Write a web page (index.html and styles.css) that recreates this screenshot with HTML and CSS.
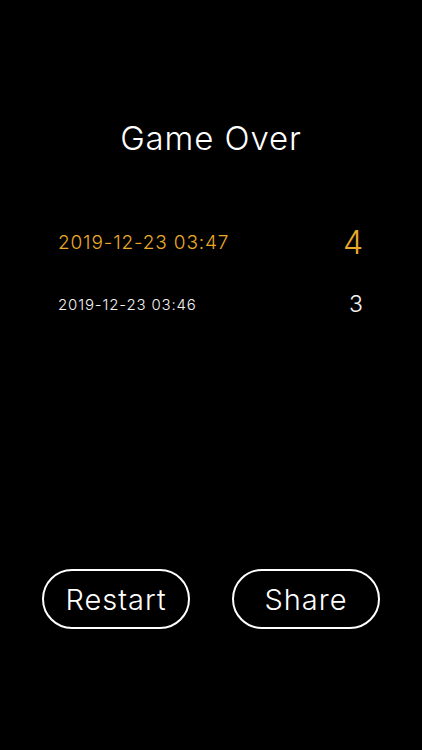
FILE: index.html
```html
<!DOCTYPE html>
<html>
<head>
<meta charset="utf-8">
<link rel="stylesheet" href="styles.css">
</head>
<body>
<div class="screen">
  <h1 class="title">Game Over</h1>
  <div class="records">
    <div class="row row-current">
      <span class="date">2019-12-23 03:47</span>
      <span class="score">4</span>
    </div>
    <div class="row row-past">
      <span class="date">2019-12-23 03:46</span>
      <span class="score">3</span>
    </div>
  </div>
  <div class="actions">
    <button class="btn">Restart</button>
    <button class="btn">Share</button>
  </div>
</div>
</body>
</html>
```
FILE: styles.css
```css
html, body {
  margin: 0;
  padding: 0;
  background: #000;
}
.screen {
  width: 422px;
  height: 750px;
  display: flex;
  flex-direction: column;
  font-family: Inter, "Liberation Sans", sans-serif;
  font-weight: 300;
  color: #fff;
}
.title {
  margin: 118px 0 0;
  font-size: 33px;
  font-weight: 300;
  letter-spacing: 0.9px;
  line-height: 40px;
  text-align: center;
}
.records {
  margin-top: 64px;
  padding: 0 59px 0 58px;
  display: flex;
  flex-direction: column;
}
.row {
  display: flex;
  justify-content: space-between;
  align-items: center;
}
.row .date { letter-spacing: 0.85px; }
.row-current {
  color: #eaa92a;
  height: 40px;
}
.row-current .date { font-size: 19px; }
.row-current .score { font-size: 32px; }
.row-past {
  margin-top: 22px;
  height: 40px;
  color: #f2f2f2;
}
.row-past .date { font-size: 15px; }
.row-past .score { font-size: 23px; }
.actions {
  margin-top: auto;
  margin-bottom: 121px;
  display: flex;
  justify-content: center;
  gap: 42px;
}
.btn {
  width: 148px;
  height: 60px;
  border: 2px solid #fff;
  border-radius: 30px;
  background: transparent;
  color: #fff;
  font-family: Inter, "Liberation Sans", sans-serif;
  font-weight: 300;
  font-size: 29px;
  letter-spacing: 1px;
  padding: 0;
}
```
